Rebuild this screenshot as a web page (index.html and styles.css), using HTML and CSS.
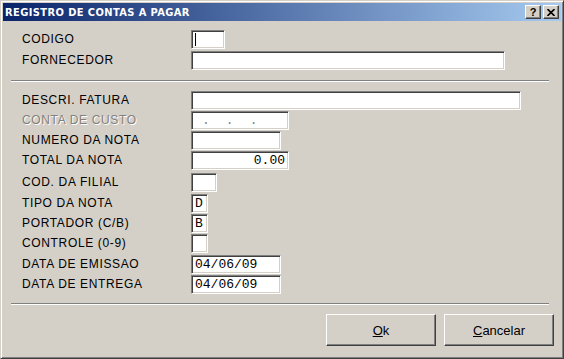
FILE: index.html
```html
<!DOCTYPE html>
<html lang="pt">
<head>
  <meta charset="UTF-8" />
  <title>Registro de Contas a Pagar</title>
  <link rel="stylesheet" href="styles.css">
</head>
<body>

  <div class="window">
    <div class="titlebar">
      <span class="title">REGISTRO DE CONTAS A PAGAR</span>
      <div class="title-buttons">
        <span class="tbtn">?</span>
        <span class="tbtn">
          <svg width="8" height="7" viewBox="0 0 8 7">
            <path d="M0.5 0 L7.5 7 M7.5 0 L0.5 7" stroke="#000" stroke-width="1.6" fill="none"/>
          </svg>
        </span>
      </div>
    </div>

    <div class="client">
      <div class="group group-top">
        <div class="row">
          <label>CODIGO</label>
          <div class="field w-34"><span class="caret"></span></div>
        </div>
        <div class="row">
          <label>FORNECEDOR</label>
          <div class="field w-314"></div>
        </div>
      </div>

      <div class="sep"></div>

      <div class="group group-main">
        <div class="row">
          <label>DESCRI. FATURA</label>
          <div class="field w-330"></div>
        </div>
        <div class="row">
          <label class="disabled">CONTA DE CUSTO</label>
          <div class="field w-98 mask"><span>.</span><span>.</span><span>.</span></div>
        </div>
        <div class="row">
          <label>NUMERO DA NOTA</label>
          <div class="field w-90"></div>
        </div>
        <div class="row">
          <label>TOTAL DA NOTA</label>
          <div class="field w-98 right">0.00</div>
        </div>
        <div class="row gap-2">
          <label>COD. DA FILIAL</label>
          <div class="field w-26"></div>
        </div>
        <div class="row gap-1">
          <label>TIPO DA NOTA</label>
          <div class="field w-17">D</div>
        </div>
        <div class="row">
          <label>PORTADOR (C/B)</label>
          <div class="field w-17">B</div>
        </div>
        <div class="row">
          <label>CONTROLE (0-9)</label>
          <div class="field w-17"></div>
        </div>
        <div class="row gap-1">
          <label>DATA DE EMISSAO</label>
          <div class="field w-90">04/06/09</div>
        </div>
        <div class="row">
          <label>DATA DE ENTREGA</label>
          <div class="field w-90">04/06/09</div>
        </div>
      </div>

      <div class="sep sep-bottom"></div>

      <div class="actions">
        <button class="btn"><u>O</u>k</button>
        <button class="btn"><u>C</u>ancelar</button>
      </div>
    </div>
  </div>

</body>
</html>
```

FILE: styles.css
```css
body {
  margin: 0;
  padding: 0;
  background-color: #d4d0c8;
  font-family: 'Liberation Sans', Arial, sans-serif;
}

.window {
  width: 564px;
  height: 359px;
  box-sizing: border-box;
  background-color: #d4d0c8;
  border: 1px solid;
  border-color: #d4d0c8 #404040 #404040 #d4d0c8;
  box-shadow: inset 1px 1px 0 #ffffff, inset -1px -1px 0 #808080;
  padding: 2px;
  display: flex;
  flex-direction: column;
}

.titlebar {
  height: 18px;
  background: linear-gradient(to right, #0a246a, #a6caf0);
  display: flex;
  align-items: center;
  justify-content: space-between;
  padding: 0 2px 0 2px;
}

.title {
  color: #fff;
  font-family: 'DejaVu Sans Condensed', 'DejaVu Sans', sans-serif;
  font-weight: bold;
  font-size: 11px;
  letter-spacing: 0.4px;
}

.title-buttons {
  display: flex;
  gap: 2px;
}

.tbtn {
  width: 16px;
  height: 14px;
  box-sizing: border-box;
  background-color: #d4d0c8;
  border: 1px solid;
  border-color: #ffffff #404040 #404040 #ffffff;
  box-shadow: inset -1px -1px 0 #808080;
  color: #000;
  font-family: 'Liberation Sans', sans-serif;
  font-weight: bold;
  font-size: 11px;
  line-height: 12px;
  text-align: center;
  display: flex;
  align-items: center;
  justify-content: center;
}

.client {
  flex: 1;
  padding: 0 7px 0 8px;
  display: flex;
  flex-direction: column;
}

.group {
  padding-left: 11px;
}

.group-top {
  margin-top: 8px;
  display: flex;
  flex-direction: column;
  gap: 1px;
}

.group-main {
  margin-top: 8px;
}

.row {
  display: flex;
  align-items: center;
  height: 20px;
}

.gap-1 { margin-top: 1px; }
.gap-2 { margin-top: 2px; }

label {
  width: 169px;
  font-size: 12px;
  letter-spacing: 0.65px;
  color: #000;
}

label.disabled {
  color: #808080;
  text-shadow: 1px 1px 0 #ffffff;
}

.field {
  height: 19px;
  box-sizing: border-box;
  background-color: #fff;
  border: 1px solid;
  border-color: #808080 #ffffff #ffffff #808080;
  box-shadow: inset 1px 1px 0 #404040, inset -1px -1px 0 #d4d0c8;
  font-family: 'Liberation Mono', 'Courier New', monospace;
  font-size: 13px;
  line-height: 17px;
  padding: 0 3px;
  display: flex;
  align-items: center;
}

.field.right {
  justify-content: flex-end;
}

.caret {
  width: 1px;
  height: 13px;
  background-color: #000;
}

.mask {
  color: #808080;
  gap: 16px;
  padding-left: 10px;
}

.w-17 { width: 17px; }
.w-26 { width: 26px; }
.w-34 { width: 34px; }
.w-90 { width: 90px; }
.w-98 { width: 98px; }
.w-314 { width: 314px; }
.w-330 { width: 330px; }

.sep {
  width: 538px;
  height: 0;
  border-top: 1px solid #808080;
  border-bottom: 1px solid #ffffff;
  margin-top: 10px;
}

.sep-bottom {
  margin-top: 9px;
}

.actions {
  display: flex;
  justify-content: flex-end;
  gap: 8px;
  margin-top: 9px;
}

.btn {
  width: 110px;
  height: 32px;
  box-sizing: border-box;
  background-color: #d4d0c8;
  border: 1px solid;
  border-color: #ffffff #404040 #404040 #ffffff;
  box-shadow: inset -1px -1px 0 #808080;
  font-family: 'Liberation Sans', sans-serif;
  font-size: 13px;
  color: #000;
  cursor: pointer;
  padding: 0;
}
```
